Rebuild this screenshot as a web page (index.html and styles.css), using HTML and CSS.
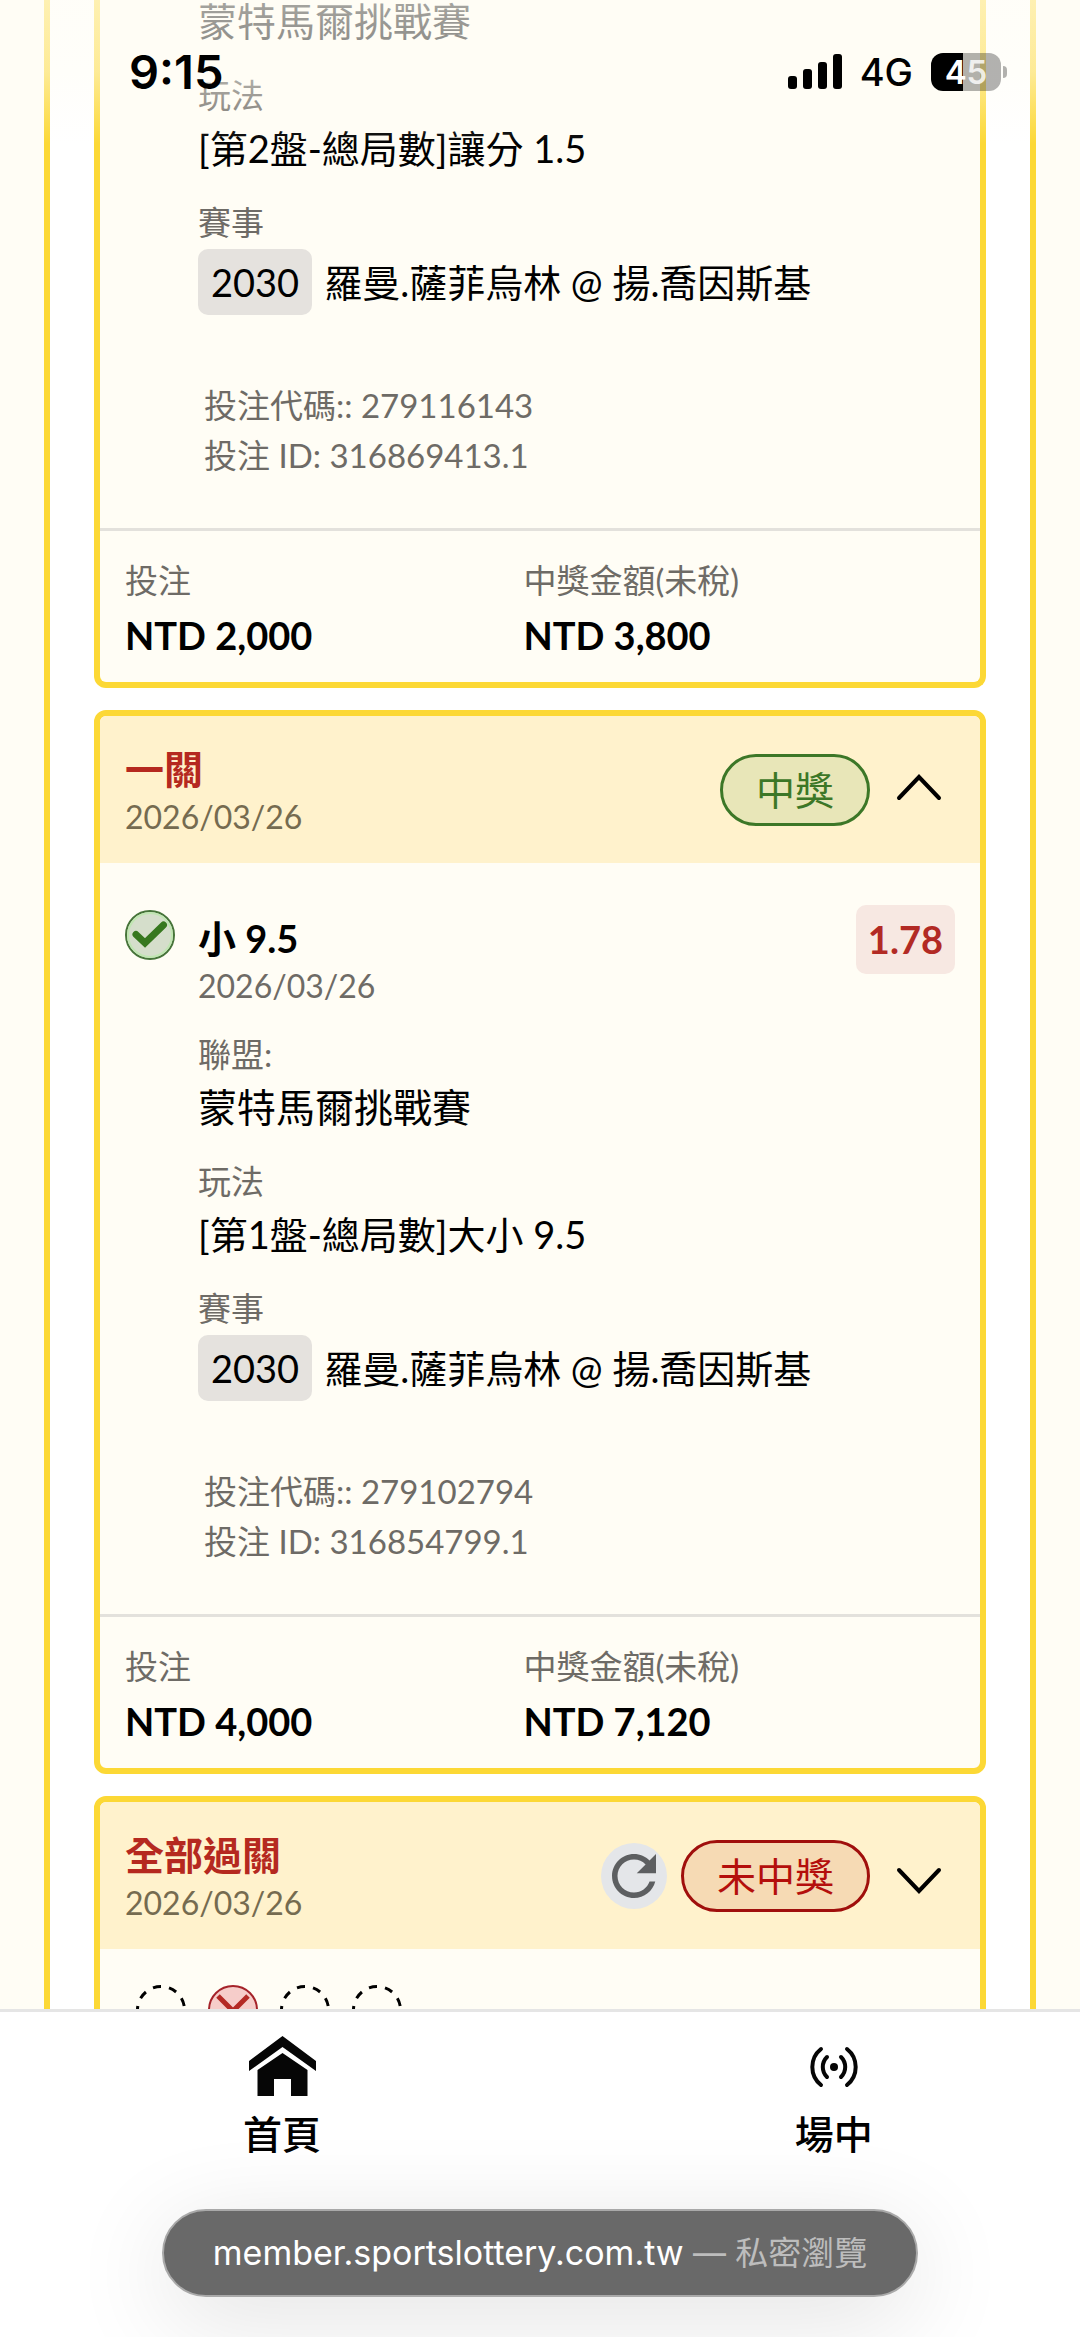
FILE: index.html
```html
<!DOCTYPE html>
<html lang="zh-Hant">
<head>
<meta charset="utf-8">
<meta name="viewport" content="width=device-width, initial-scale=1">
<title>投注紀錄</title>
<link rel="stylesheet" href="styles.css">
</head>
<body>
<header class="status">
  <span class="time">9:15</span>
  <div class="status-icons">
    <svg class="signal" viewBox="0 0 54 36" aria-hidden="true"><rect x="0" y="22" width="9" height="13" rx="3"/><rect x="15" y="15" width="9" height="20" rx="3"/><rect x="30" y="8" width="9" height="27" rx="3"/><rect x="45" y="0" width="9" height="35" rx="3"/></svg>
    <span class="network">4G</span>
    <span class="battery"><span class="battery-level">4<span class="battery-dim">5</span></span></span>
  </div>
</header>

<main class="scroller">
  <div class="bets">
    <article class="card card-clipped">
      <div class="card-body">
        <div class="mark"></div>
        <div class="details">
          <dl class="fields">
            <div><dd class="league">蒙特馬爾挑戰賽</dd></div>
            <div><dt>玩法</dt><dd>[第2盤-總局數]讓分 1.5</dd></div>
            <div><dt>賽事</dt><dd class="match"><span class="code">2030</span>羅曼.薩菲烏林 @ 揚.喬因斯基</dd></div>
          </dl>
          <p class="ids">投注代碼:: 279116143<br>投注 ID: 316869413.1</p>
        </div>
      </div>
      <dl class="totals">
        <div><dt>投注</dt><dd>NTD 2,000</dd></div>
        <div><dt>中獎金額(未稅)</dt><dd>NTD 3,800</dd></div>
      </dl>
    </article>

    <article class="card">
      <div class="card-head">
        <div class="heading"><h2>一關</h2><time>2026/03/26</time></div>
        <span class="pill won">中獎</span>
        <button class="toggle" type="button" aria-label="收合"><svg viewBox="0 0 66 66"><path d="M13 41 33 20 53 41"/></svg></button>
      </div>
      <div class="card-body">
        <div class="mark">
          <svg viewBox="0 0 50 50" aria-hidden="true"><circle cx="25" cy="25" r="24" fill="#d5decb" stroke="#47743a" stroke-width="2"/><circle cx="25" cy="25" r="22" fill="none" stroke="#c0e6b2" stroke-width="2"/><path d="M11 24.500 20 33 38.500 15" fill="none" stroke="#37781f" stroke-width="7" stroke-linecap="round"/></svg>
        </div>
        <div class="details">
          <div class="pick"><h3>小 9.5</h3><time>2026/03/26</time></div>
          <dl class="fields">
            <div><dt>聯盟:</dt><dd class="league">蒙特馬爾挑戰賽</dd></div>
            <div><dt>玩法</dt><dd>[第1盤-總局數]大小 9.5</dd></div>
            <div><dt>賽事</dt><dd class="match"><span class="code">2030</span>羅曼.薩菲烏林 @ 揚.喬因斯基</dd></div>
          </dl>
          <p class="ids">投注代碼:: 279102794<br>投注 ID: 316854799.1</p>
        </div>
        <span class="odds">1.78</span>
      </div>
      <dl class="totals">
        <div><dt>投注</dt><dd>NTD 4,000</dd></div>
        <div><dt>中獎金額(未稅)</dt><dd>NTD 7,120</dd></div>
      </dl>
    </article>

    <article class="card">
      <div class="card-head">
        <div class="heading"><h2>全部過關</h2><time>2026/03/26</time></div>
        <button class="reload" type="button" aria-label="重新投注"><svg viewBox="0 0 24 24"><path d="M17.650 6.350C16.200 4.900 14.210 4 12 4c-4.420 0-7.990 3.580-7.990 8s3.570 8 7.990 8c3.730 0 6.840-2.550 7.730-6h-2.080c-.820 2.330-3.040 4-5.650 4-3.310 0-6-2.690-6-6s2.690-6 6-6c1.660 0 3.140.690 4.220 1.780L13 11h7V4l-2.350 2.350z"/></svg></button>
        <span class="pill lost">未中獎</span>
        <button class="toggle" type="button" aria-label="展開"><svg viewBox="0 0 66 66"><path d="M13 27 33 48 53 27"/></svg></button>
      </div>
      <div class="legs">
        <svg class="open" viewBox="0 0 50 50"><circle cx="25" cy="25" r="23.500" pathLength="360"/></svg>
        <svg viewBox="0 0 50 50"><circle cx="25" cy="25" r="24" fill="#f6cdca" stroke="#a5232a" stroke-width="2"/><path d="M10 11 40 41M40 11 10 41" fill="none" stroke="#b42a25" stroke-width="5"/></svg>
        <svg class="open" viewBox="0 0 50 50"><circle cx="25" cy="25" r="23.500" pathLength="360"/></svg>
        <svg class="open" viewBox="0 0 50 50"><circle cx="25" cy="25" r="23.500" pathLength="360"/></svg>
      </div>
    </article>
  </div>
</main>

<footer class="bottom">
  <nav class="tabs">
    <a href="#home"><svg width="67" height="61" viewBox="0 0 67 61" fill="#060606" aria-hidden="true"><path d="M33.500 0 67 25V35L33.500 11 0 35V25z"/><path d="M33.500 17 58.500 34V60H42V43H25V60H8.500V34z"/></svg>首頁</a>
    <a href="#live"><svg width="50" height="61" viewBox="0 -10 50 61" fill="none" stroke="#060606" stroke-width="4" stroke-linecap="round" aria-hidden="true"><circle cx="25" cy="21" r="4" fill="#060606" stroke="none"/><path d="M12 3A23 23 0 0 0 12 39M38 3A23 23 0 0 1 38 39M18 11A14 14 0 0 0 18 31M32 11A14 14 0 0 1 32 31"/></svg>場中</a>
  </nav>
  <div class="address"><span class="host">member.sportslottery.com.tw</span> <span class="private">— 私密瀏覽</span></div>
</footer>
</body>
</html>
```

FILE: styles.css
```css
* { box-sizing: border-box; margin: 0; }

body {
  display: flex;
  flex-direction: column;
  height: 100vh;
  overflow: hidden;
  background: #fffdf5;
  color: #000;
  font: 39px/58px Lato, "Noto Sans CJK TC", sans-serif;
}

svg { display: block; }
button { padding: 0; border: 0; background: none; flex: none; }

/* Status bar, floating over the scrolled list */
.status {
  position: absolute;
  inset: 0 0 auto;
  z-index: 1;
  display: flex;
  justify-content: space-between;
  padding: 43px 73px 43px 129px;
  background: linear-gradient(rgba(255, 253, 245, .65), rgba(255, 253, 245, .5) 50%, rgba(255, 253, 245, 0));
  font-family: Inter, "Liberation Sans", sans-serif;
}
.time { font-size: 47px; font-weight: 600; }
.status-icons { display: flex; align-items: center; gap: 18px; }
.signal { width: 54px; height: 36px; }
.network { font-size: 38px; font-weight: 500; }
.battery { display: flex; align-items: center; gap: 2px; }
.battery::after {
  content: "";
  width: 4px;
  height: 12px;
  border-radius: 0 6px 6px 0;
  background: rgba(0, 0, 0, .3);
}
.battery-level {
  width: 70px;
  border-radius: 12px;
  background: linear-gradient(90deg, #000 46%, rgba(0, 0, 0, .3) 46%);
  color: #fff;
  font-size: 33px;
  font-weight: 600;
  line-height: 38px;
  text-align: center;
}
.battery-dim { opacity: .8; }

/* Bet list */
.scroller { flex: 1; min-height: 0; overflow: hidden; padding: 0 44px; }
.bets {
  display: flex;
  flex-direction: column;
  gap: 22px;
  min-height: 100%;
  padding: 0 44px;
  border: solid #fcd835;
  border-width: 0 6px;
  background: #fff;
}
.card {
  overflow: hidden;
  border: 6px solid #fcd835;
  border-radius: 12px;
  background: #fffdf5;
  flex: none;
}
.card:last-child { height: 400px; }
.card-clipped { margin-top: -8px; border-top: 0; border-radius: 0 0 12px 12px; }
.card-clipped .card-body { padding-top: 0; }

.card-head {
  display: flex;
  align-items: center;
  height: 147px;
  padding: 0 28px 0 25px;
  background: #fff2cc;
}
.heading { flex: 1; padding-top: 5px; }
h2 { color: #b5291f; font-size: 39px; font-weight: 700; line-height: 50px; }
h3 { font-size: 38px; font-weight: 700; line-height: 50px; }
time { display: block; color: #6e6b66; font-size: 32px; line-height: 46px; }
.card-head time { color: #756b50; }

.pill {
  padding: 0 33px;
  border: 3px solid;
  border-radius: 36px;
  line-height: 66px;
}
.won { color: #3c7727; background: #e8e6b8; }
.lost { color: #b40f0c; background: #f6dab4; border-color: #a00f0c; }
.toggle { width: 66px; height: 66px; margin-left: 16px; }
.toggle svg { fill: none; stroke: #000; stroke-width: 4; stroke-linecap: round; }
.reload { width: 66px; height: 66px; margin-right: 14px; border-radius: 50%; background: #e4e6e9; }
.reload svg { fill: #5d5f61; }

.card-body { display: flex; gap: 23px; padding: 42px 25px 48px; }
.mark { flex: none; width: 50px; padding-top: 5px; }
.details { flex: 1; }
.pick { padding: 8px 0 21px; }
.odds {
  align-self: flex-start;
  padding: 0 12px;
  border-radius: 10px;
  background: #f7e8e2;
  color: #b22a24;
  font-size: 38px;
  font-weight: 700;
  line-height: 69px;
}
.fields { display: flex; flex-direction: column; gap: 21px; }
dt { color: #6e6b66; font-size: 33px; line-height: 48px; }
dd { margin: 0; font-size: 38px; }
.league { font-size: 39px; }
.match { display: flex; align-items: center; gap: 12px; padding-top: 3px; }
.code { padding: 0 13px; border-radius: 10px; background: #e5e2de; line-height: 66px; }
.ids { padding: 65px 0 0 6px; color: #6e6b66; font-size: 33px; line-height: 50px; }

.totals {
  display: grid;
  grid-template-columns: 48% 1fr;
  padding: 25px 25px 18px;
  border-top: 3px solid #e3e1dc;
}
.totals dd { padding-top: 2px; font-weight: 700; }

.legs { display: flex; gap: 22px; padding: 36px; }
.legs svg { width: 50px; height: 50px; }
.open circle { fill: none; stroke: #000; stroke-width: 3; stroke-dasharray: 20 20; stroke-dashoffset: -10; }

/* Bottom navigation and collapsed address bar */
.bottom {
  display: flex;
  flex-direction: column;
  align-items: center;
  gap: 51px;
  overflow: hidden;
  padding: 24px 0 40px;
  border-top: 3px solid #e5e5e5;
  background: #fff;
}
.tabs {
  display: flex;
  justify-content: space-between;
  align-self: stretch;
  padding: 0 19.2% 0 22.5%;
}
.tabs a {
  display: flex;
  flex-direction: column;
  align-items: center;
  gap: 13px;
  color: #000;
  font-weight: 500;
  line-height: 48px;
  text-decoration: none;
}
.address {
  width: 70%;
  border: 2px solid #a9a9a9;
  border-radius: 44px;
  background: #696969;
  box-shadow: 0 20px 100px rgba(0, 0, 0, .12);
  color: #fff;
  font: 33px/83px Inter, "Noto Sans CJK TC", sans-serif;
  text-align: center;
  white-space: nowrap;
}
.host { font-size: 34px; }
.private { color: #bdbdbd; }
```
